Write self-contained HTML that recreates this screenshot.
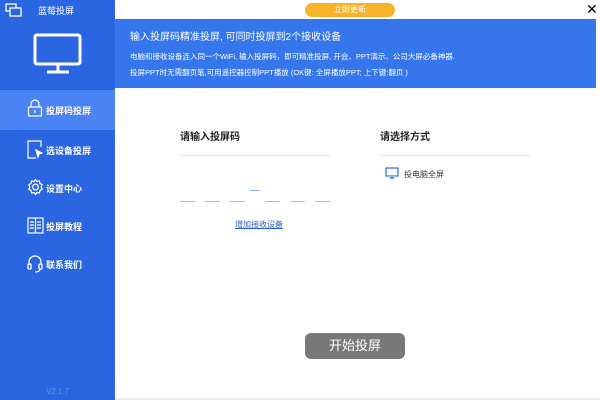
<!DOCTYPE html>
<html><head><meta charset="utf-8"><style>
*{margin:0;padding:0;box-sizing:border-box}
body{width:600px;height:400px;overflow:hidden;background:#fff;position:relative;font-family:"Liberation Sans","Noto Sans CJK SC",sans-serif}
.side{position:absolute;left:0;top:0;width:115px;height:400px;background:#2b66e2}
.hd{position:absolute;left:115px;top:19px;width:481px;height:69px;background:#3576ec;color:#fff}
.abs{position:absolute}
.item{position:absolute;left:0;width:115px;height:38px;color:#fff;font-size:9px;font-weight:bold}
.item span{position:absolute;left:46px;top:13px}
.item svg{position:absolute;left:27px;top:9px}
</style></head><body>
<div class="side">
  <svg class="abs" style="left:5px;top:3px" width="18" height="14" viewBox="0 0 18 14" fill="none" stroke="#fff" stroke-width="1.3"><rect x="1" y="1" width="10" height="7"/><rect x="5" y="5" width="11" height="8" fill="#2b66e2"/></svg>
  <div class="abs" style="left:38px;top:4px;color:#fff;font-size:9px">蓝莓投屏</div>
  <svg class="abs" style="left:33px;top:33px" width="50" height="42" viewBox="0 0 50 42" fill="none" stroke="#fff" stroke-width="3"><rect x="2" y="2" width="45" height="29" rx="2"/><line x1="25" y1="31" x2="25" y2="39"/><line x1="14" y1="39" x2="36" y2="39"/></svg>
  <div class="item" style="top:90px;height:40px;background:#4a83f2"><svg width="16" height="18" viewBox="0 0 16 18" fill="none" stroke="#fff" stroke-width="1.2"><path d="M4 8V5a4 4 0 0 1 8 0v3"/><rect x="1.5" y="8" width="13" height="9" rx="1"/><line x1="8" y1="11" x2="8" y2="14"/></svg><span style="top:14px">投屏码投屏</span></div>
  <div class="item" style="top:131px"><svg width="16" height="20" viewBox="0 0 16 20" fill="none" stroke="#fff" stroke-width="1.2"><path d="M14 7V1H1v17h8"/><path d="M9 10l6 3-3 1-1 3z" fill="#fff"/></svg><span>选设备投屏</span></div>
  <div class="item" style="top:169px"><svg width="17" height="18" viewBox="0 0 18 18" fill="none" stroke="#fff" stroke-width="1.3"><circle cx="9" cy="9" r="3"/><path d="M9 1l1.5 2.2 2.6-.6.6 2.6L16 6.5 15 9l1 2.5-2.3 1.3-.6 2.6-2.6-.6L9 17l-1.5-2.2-2.6.6-.6-2.6L2 11.5 3 9 2 6.5l2.3-1.3.6-2.6 2.6.6z"/></svg><span>设置中心</span></div>
  <div class="item" style="top:207px"><svg width="17" height="18" viewBox="0 0 17 18" fill="none" stroke="#fff" stroke-width="1.2"><rect x="1" y="2" width="15" height="15"/><line x1="8.5" y1="2" x2="8.5" y2="17"/><path d="M3 6h4M3 9h4M3 12h4M10 6h4M10 9h4M10 12h4"/></svg><span>投屏教程</span></div>
  <div class="item" style="top:245px"><svg width="16" height="20" viewBox="0 0 16 20" fill="none" stroke="#fff" stroke-width="1.3"><path d="M2 11V8a6 6 0 0 1 12 0v3"/><rect x="1" y="10" width="3" height="5" rx="1"/><rect x="12" y="10" width="3" height="5" rx="1"/><path d="M13 15c0 2-2 3-5 3"/></svg><span>联系我们</span></div>
  <div class="abs" style="left:46px;top:387px;color:#5d8ae8;font-size:8px">V2.1.7</div>
</div>
<div class="abs" style="left:305px;top:3px;width:90px;height:14px;border-radius:7px;background:#f8b328;color:#fff;font-size:8px;text-align:center;line-height:14px">立即更新</div>
<div class="abs" style="left:586px;top:2px;font-size:14px;color:#000;line-height:14px">✕</div>
<div class="hd">
  <div class="abs" style="left:15px;top:9px;font-size:10px">输入投屏码精准投屏, 可同时投屏到2个接收设备</div>
  <div class="abs" style="left:15px;top:32px;font-size:7.5px">电脑和接收设备连入同一个WiFi, 输入投屏码，即可精准投屏, 开会、PPT演示、公司大屏必备神器.</div>
  <div class="abs" style="left:15px;top:48px;font-size:7.5px">投屏PPT时无需翻页笔,可用遥控器控制PPT播放 (OK键: 全屏播放PPT; 上下键:翻页 )</div>
</div>
<div class="abs" style="left:180px;top:128px;font-size:10px;font-weight:bold;color:#222">请输入投屏码</div>
<div class="abs" style="left:180px;top:155px;width:150px;height:1px;background:#dde3ec"></div>
<div class="abs" style="left:250px;top:190px;width:10px;height:1px;background:#8fb0e8"></div>
<div class="abs" style="left:180px;top:201px;width:15px;height:1px;background:#bbb"></div>
<div class="abs" style="left:205px;top:201px;width:15px;height:1px;background:#bbb"></div>
<div class="abs" style="left:230px;top:201px;width:15px;height:1px;background:#bbb"></div>
<div class="abs" style="left:265px;top:201px;width:15px;height:1px;background:#bbb"></div>
<div class="abs" style="left:290px;top:201px;width:15px;height:1px;background:#bbb"></div>
<div class="abs" style="left:315px;top:201px;width:15px;height:1px;background:#bbb"></div>
<div class="abs" style="left:235px;top:219px;font-size:8px;color:#2a5fd0;text-decoration:underline">增加接收设备</div>
<div class="abs" style="left:380px;top:128px;font-size:10px;font-weight:bold;color:#222">请选择方式</div>
<div class="abs" style="left:380px;top:155px;width:150px;height:1px;background:#dde3ec"></div>
<svg class="abs" style="left:385px;top:167px" width="14" height="13" viewBox="0 0 14 13" fill="none" stroke="#3a7be6" stroke-width="1.3"><rect x="1" y="1" width="12" height="8"/><rect x="5.5" y="10" width="3" height="2" fill="#3a7be6" stroke="none"/></svg>
<div class="abs" style="left:404px;top:169px;font-size:8px;color:#333">投电脑全屏</div>
<div class="abs" style="left:305px;top:333px;width:100px;height:26px;border-radius:6px;background:#787878;color:#fff;font-size:13px;text-align:center;line-height:26px">开始投屏</div>
<div class="abs" style="left:115px;top:398px;width:485px;height:2px;background:#e6ecf2"></div>
</body></html>
